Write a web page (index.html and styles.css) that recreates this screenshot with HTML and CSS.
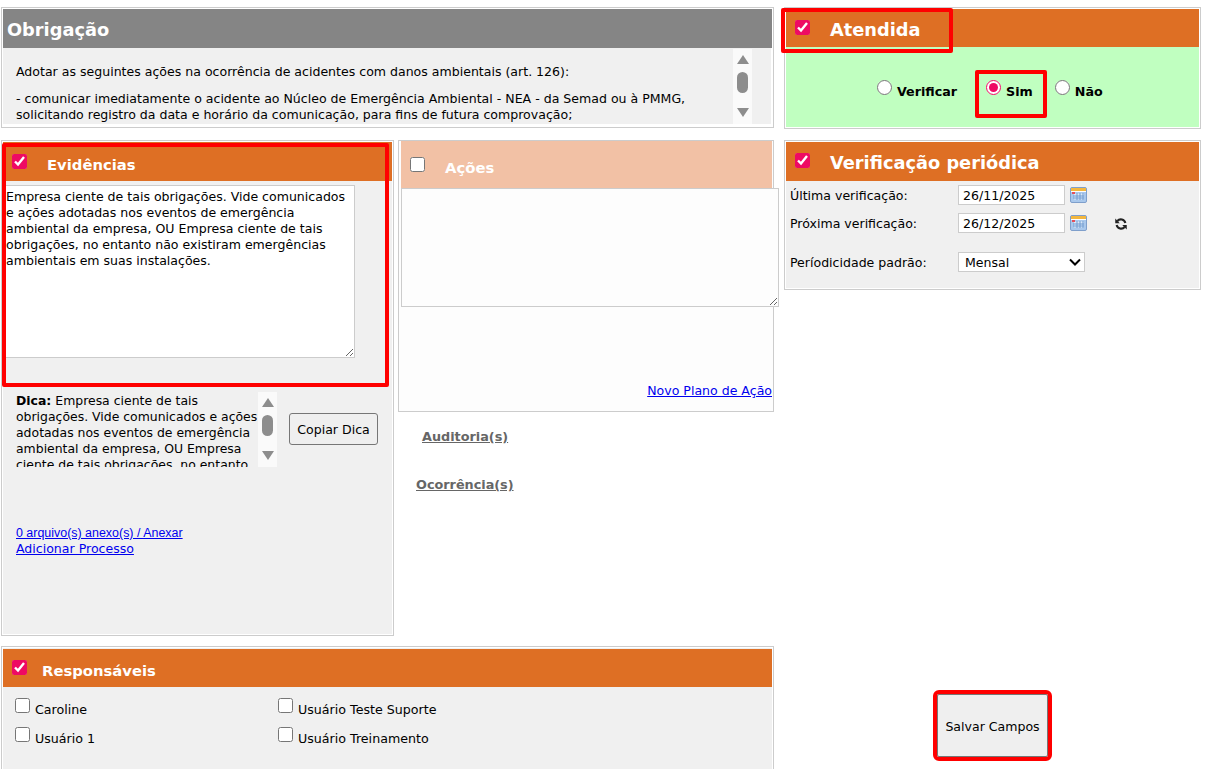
FILE: index.html
```html
<!DOCTYPE html>
<html lang="pt-BR">
<head>
<meta charset="utf-8">
<title>Obrigação</title>
<link rel="stylesheet" href="styles.css">
</head>
<body>
<svg class="defs" width="0" height="0" aria-hidden="true">
  <defs>
    <symbol id="cal" viewBox="0 0 17 16">
      <rect x="0.5" y="0.5" width="16" height="15" rx="1.5" fill="#a9c8ec" stroke="#7f9fcb"/>
      <rect x="1" y="1" width="15" height="3" fill="#f3b73f"/>
      <rect x="1" y="4" width="15" height="1" fill="#fff"/>
      <path d="M4 6.5h10v6H4z" fill="#dbe8f7"/>
      <path d="M7 6v7M10 6v7M13 6v7M3 9h11M3 11h11" stroke="#6f9bd1" stroke-width="1"/>
      <rect x="2" y="5" width="3" height="2" fill="#e4505a"/>
    </symbol>
  </defs>
</svg>
<main class="page">
  <section class="panel obrig">
    <h2 class="head head-gray big"><span>Obrigação</span></h2>
    <div class="obrig-body">
      <div class="obrig-text">
        <p>Adotar as seguintes ações na ocorrência de acidentes com danos ambientais (art. 126):</p>
        <p>- comunicar imediatamente o acidente ao Núcleo de Emergência Ambiental - NEA - da Semad ou à PMMG, solicitando registro da data e horário da comunicação, para fins de futura comprovação;</p>
      </div>
      <div class="sbar"><i class="up"></i><b class="thumb"></b><i class="down"></i></div>
    </div>
  </section>

  <section class="panel atend">
    <h2 class="head big"><input class="check" type="checkbox" checked><span>Atendida</span></h2>
    <div class="atend-body">
      <label class="rad"><input type="radio" name="a"><span>Verificar</span></label>
      <label class="rad rad-sim"><input type="radio" name="a" checked><span>Sim</span></label>
      <label class="rad"><input type="radio" name="a"><span>Não</span></label>
    </div>
  </section>

  <div class="mid">
    <section class="panel evid">
      <h2 class="head small"><input class="check" type="checkbox" checked><span>Evidências</span></h2>
      <textarea class="evid-ta">Empresa ciente de tais obrigações. Vide comunicados e ações adotadas nos eventos de emergência ambiental da empresa, OU Empresa ciente de tais obrigações, no entanto não existiram emergências ambientais em suas instalações.</textarea>
      <div class="dica-row">
        <div class="dica-text"><b>Dica:</b> Empresa ciente de tais obrigações. Vide comunicados e ações adotadas nos eventos de emergência ambiental da empresa, OU Empresa ciente de tais obrigações, no entanto não existiram emergências ambientais em suas instalações.</div>
        <div class="sbar"><i class="up"></i><b class="thumb"></b><i class="down"></i></div>
        <button class="copy" type="button">Copiar Dica</button>
      </div>
      <div class="evid-links">
        <a class="narrow" href="#">0 arquivo(s) anexo(s) / Anexar</a>
        <a href="#">Adicionar Processo</a>
      </div>
    </section>
    <div class="mid-right">
      <section class="panel acoes">
        <h2 class="head head-light small"><input class="check" type="checkbox"><span>Ações</span></h2>
        <textarea class="acoes-ta"></textarea>
        <a class="novo" href="#">Novo Plano de Ação</a>
      </section>
      <a class="sub sub-a" href="#">Auditoria(s)</a>
      <a class="sub sub-o" href="#">Ocorrência(s)</a>
    </div>
  </div>

  <section class="panel verif">
    <h2 class="head big"><input class="check" type="checkbox" checked><span>Verificação periódica</span></h2>
    <div class="verif-body">
      <div class="vrow">
        <label>Última verificação:</label>
        <input class="date" type="text" value="26/11/2025">
        <svg class="cal"><use href="#cal"/></svg>
      </div>
      <div class="vrow">
        <label>Próxima verificação:</label>
        <input class="date" type="text" value="26/12/2025">
        <svg class="cal"><use href="#cal"/></svg>
        <svg class="sync" viewBox="0 0 16 16">
          <path d="M13 6.8A5.3 5.3 0 0 0 3.8 4.6" fill="none" stroke="#222" stroke-width="2.4"/>
          <path d="M1.4 1.8v5.2h5.2z" fill="#222"/>
          <path d="M3 9.2a5.3 5.3 0 0 0 9.2 2.2" fill="none" stroke="#222" stroke-width="2.4"/>
          <path d="M14.6 14.2V9h-5.2z" fill="#222"/>
        </svg>
      </div>
      <div class="vrow vrow-sel">
        <label>Períodicidade padrão:</label>
        <select class="sel"><option>Mensal</option></select>
      </div>
    </div>
  </section>

  <section class="panel resp">
    <h2 class="head small"><input class="check" type="checkbox" checked><span>Responsáveis</span></h2>
    <div class="resp-grid">
      <label class="opt"><input type="checkbox"><span>Caroline</span></label>
      <label class="opt"><input type="checkbox"><span>Usuário Teste Suporte</span></label>
      <label class="opt"><input type="checkbox"><span>Usuário 1</span></label>
      <label class="opt"><input type="checkbox"><span>Usuário Treinamento</span></label>
    </div>
  </section>

  <div class="save-wrap"><button class="save" type="button">Salvar Campos</button></div>
</main>
<div class="mark mark-atend"></div>
<div class="mark mark-sim"></div>
<div class="mark mark-evid"></div>
</body>
</html>
```
FILE: styles.css
```css
* { box-sizing: border-box; }
html, body { height: 769px; overflow: hidden; }
body {
  margin: 0;
  background: #fff;
  color: #000;
  font: 12.55px/16px "DejaVu Sans", Verdana, sans-serif;
  position: relative;
}
.defs { position: absolute; }
.page {
  display: grid;
  grid-template-columns: 773px 417px;
  grid-template-rows: 123px 496px 140px;
  column-gap: 10px;
  row-gap: 10px;
  padding: 7px 0 0 1px;
  height: 769px;
  overflow: hidden;
}
.panel { border: 1px solid #ccc; background: #fff; padding: 1px; min-width: 0; }
.head {
  margin: 0;
  display: flex;
  align-items: center;
  background: #de6f24;
  color: #fff;
  font-weight: bold;
  height: 38px;
}
.head.big { font-size: 17.8px; }
.head.small { font-size: 14.8px; }
.head-gray { background: #858585; padding-left: 4px; }
.head-light { background: #f2c1a5; }
.check, .opt input, .rad input {
  width: 15px; height: 15px; margin: 0;
  accent-color: #ee0a63;
}
.obrig { height: 121px; }
.obrig .head { height: 39px; }
.obrig .head span { margin-top: 2px; }
.obrig-body {
  display: flex;
  height: 76px;
  overflow: hidden;
  background: #f0f0f0;
  margin-right: 1px;
  padding-left: 13px;
}
.obrig-text { width: 717px; padding-top: 16px; }
.obrig-text p { margin: 0 0 11px; }
.sbar {
  flex: none;
  width: 19px;
  height: 75px;
  background: #fafafa;
  display: flex;
  flex-direction: column;
  align-items: center;
  padding-top: 6px;
  position: relative;
}
.up, .down { width: 0; height: 0; border-left: 6.5px solid transparent; border-right: 6.5px solid transparent; }
.up { border-bottom: 9px solid #8d8d8d; }
.down { border-top: 9px solid #8d8d8d; margin-top: 15px; }
.thumb { width: 11px; height: 21px; border-radius: 6px; background: #8d8d8d; margin-top: 8px; }
.obrig .sbar { margin-top: 1px; }
.atend { height: 122px; }
.atend .head { height: 38px; padding-left: 9px; }
.atend .head .check { margin-bottom: 2px; }
.atend .head span { margin: 4px 0 0 20px; }
.atend-body {
  background: #c0ffc0;
  height: 80px;
  display: flex;
  padding: 33px 0 0 91px;
  font-weight: bold;
  font-size: 12.7px;
}
.rad { display: flex; align-items: flex-start; }
.rad input { margin-right: 5px; }
.rad span { margin-top: 4px; }
.rad-sim { margin-left: 29px; margin-right: 22px; }
.mid { display: flex; gap: 4px; min-width: 0; }
.evid { width: 393px; background: #f0f0f0; box-shadow: inset 0 0 0 1px #fff; }
.evid .head { height: 39px; padding-left: 9px; }
.evid .head span { margin: 6px 0 0 20px; }
.evid-ta {
  display: block;
  width: 351px;
  height: 173px;
  margin: 4px 0 0 1px;
  border: 1px solid #ccc;
  border-radius: 0;
  outline: 0;
  background: #fff;
  padding: 3px 1px;
  font: 12.55px/16px "DejaVu Sans", Verdana, sans-serif;
  color: #000;
}
.dica-row { display: flex; margin: 34px 0 0 13px; height: 75px; }
.dica-text { flex: none; width: 242px; height: 75px; overflow: hidden; padding-top: 1px; font-size: 12.45px; }
.copy {
  width: 89px; height: 32px;
  margin: 21px 0 0 12px;
  padding: 0;
  background: #efefef;
  border: 1px solid #767676;
  border-radius: 3px;
  font: 12.55px "DejaVu Sans", Verdana, sans-serif;
  color: #000;
}
.evid-links { display: flex; flex-direction: column; align-items: flex-start; margin: 58px 0 0 13px; }
a { color: #00e; }
.narrow { font-family: "Liberation Sans", Arial, sans-serif; font-size: 12.45px; }
.mid-right { flex: 1; min-width: 0; display: flex; flex-direction: column; align-items: flex-start; }
.acoes {
  width: 376px; height: 272px;
  background: #fdfdfd;
  padding: 0 1px 0 2px;
  position: relative;
  display: flex; flex-direction: column;
}
.acoes .head { flex: none; height: 47px; padding-left: 9px; padding-top: 6px; }
.acoes .head .check { margin-bottom: 6px; }
.acoes .head span { margin-left: 20px; }
.acoes-ta {
  flex: none;
  width: 378px; height: 119px;
  margin: 0;
  border: 1px solid #ccc;
  border-radius: 0;
  outline: 0;
  background: #fdfdfd;
}
.novo { align-self: flex-end; margin-top: 76px; margin-right: 0; }
.sub { color: #666; font-weight: bold; font-size: 12.8px; }
.sub-a { margin: 17px 0 0 24px; }
.sub-o { margin: 32px 0 0 18px; }
.verif { height: 150px; }
.verif .head { height: 39px; padding-left: 9px; }
.verif .head .check { margin-bottom: 2px; }
.verif .head span { margin: 2px 0 0 20px; }
.verif-body { background: #f0f0f0; height: 107px; padding: 4px 0 0 4px; }
.vrow { display: flex; align-items: center; height: 20px; margin-bottom: 8px; }
.vrow label { width: 168px; padding-top: 2px; }
.date {
  width: 107px; height: 20px;
  border: 1px solid #ccc;
  background: #fff;
  padding: 0 4px;
  font: 12.55px "DejaVu Sans", Verdana, sans-serif;
  color: #000;
  margin: 0;
}
.cal { width: 17px; height: 16px; margin-left: 5px; }
.sync { width: 14px; height: 14px; margin: 2px 0 0 27px; }
.vrow-sel { margin-top: 19px; }
.sel {
  appearance: none;
  width: 127px; height: 20px;
  border: 1px solid #ccc;
  border-radius: 0;
  background: #fff url("data:image/svg+xml,%3Csvg xmlns='http://www.w3.org/2000/svg' width='12' height='8'%3E%3Cpath d='M1 1.5l5 5 5-5' fill='none' stroke='%23000' stroke-width='2'/%3E%3C/svg%3E") no-repeat right 3px center;
  font: 12.55px "DejaVu Sans", Verdana, sans-serif;
  color: #000;
  padding: 0 0 0 6px;
  margin: 0;
}
.resp { height: 140px; background: #f0f0f0; box-shadow: inset 0 0 0 1px #fff; padding-top: 2px; }
.resp .head { padding-left: 9px; }
.resp .head .check { margin-bottom: 2px; }
.resp .head span { margin: 6px 0 0 15px; }
.resp-grid {
  display: grid;
  grid-template-columns: 263px 1fr;
  grid-auto-rows: 29px;
  padding: 11px 0 0 12px;
  font-size: 12.65px;
}
.opt { display: flex; align-items: flex-start; }
.opt input { margin-right: 5px; }
.opt span { margin-top: 4px; }
.save-wrap { padding: 48px 0 0 153px; }
.save {
  width: 111px; height: 63px;
  padding: 2px 0 0;
  background: #efefef;
  border: 1px solid #767676;
  border-radius: 2px;
  font: 12.55px "DejaVu Sans", Verdana, sans-serif;
  color: #000;
  outline: 4px solid #f00;
}
.mark { position: absolute; border: 4px solid #f00; border-radius: 2px; pointer-events: none; }
.mark-atend { left: 781px; top: 8px; width: 172px; height: 45px; }
.mark-sim { left: 975px; top: 70px; width: 72px; height: 48px; }
.mark-evid { left: 2px; top: 143px; width: 387px; height: 244px; }
```
